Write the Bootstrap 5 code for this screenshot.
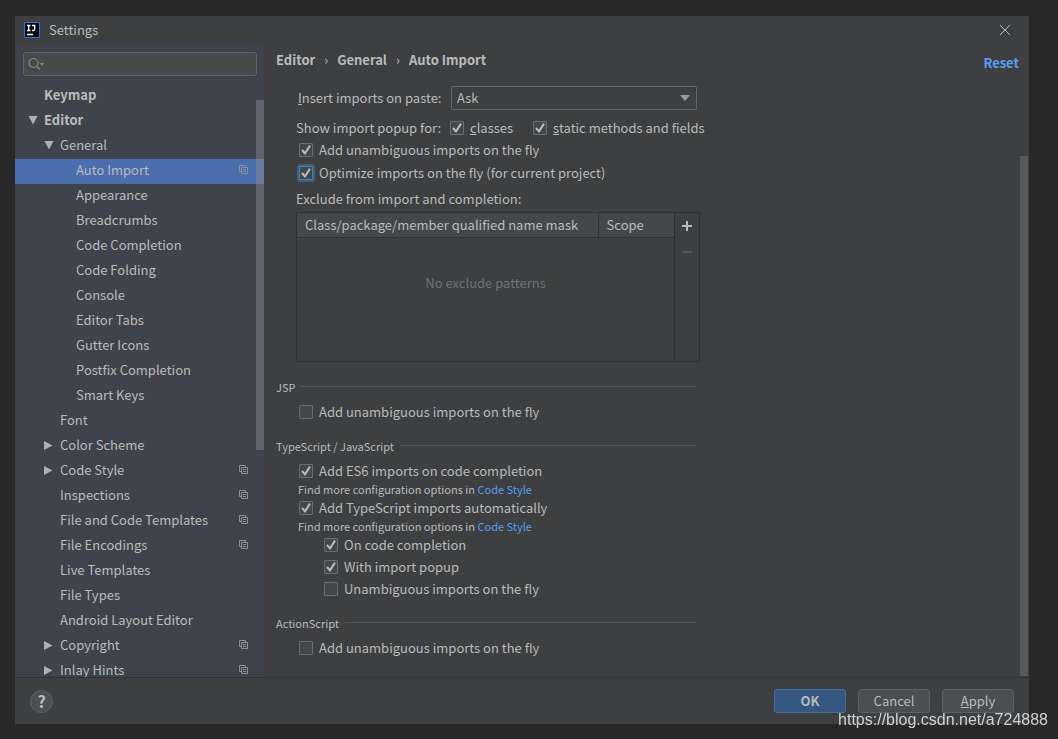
<!DOCTYPE html>
<html lang="en" data-bs-theme="dark">
<head>
<meta charset="utf-8">
<meta name="viewport" content="width=device-width, initial-scale=1">
<title>Settings</title>
<link href="https://cdn.jsdelivr.net/npm/bootstrap@5.3.0/dist/css/bootstrap.min.css" rel="stylesheet">
<style>
  :root { --panel: #3d3f40; --side: #3f434b; --edge: #2f3132; --line: #535657; --ink: #b9bbbd; --link: #589df6; }
  body { background: #282828; color: var(--ink); font: 13px/20px "Noto Sans CJK SC", "Noto Sans", sans-serif; }
  a { color: var(--link); text-decoration: none; }
  .app-shell { height: 100vh; padding: 16px 29px 15px 15px; }
  .app-window { background: var(--panel); }
  .title-bar { height: 28px; padding: 0 18px 0 9px; gap: 9px; }
  .close-btn { width: 12px; height: 12px; color: var(--ink); }
  .body-area { min-height: 0; border-bottom: 1px solid var(--edge); }

  .side-pane { width: 249px; background: var(--side); }
  .search-wrap { margin: 8px 7px 8px 8px; }
  .search-box { height: 24px; min-height: 24px; padding: 0 8px 0 24px; background: #454a4b; border: 1px solid #5f6465; border-radius: 3px; }
  .search-icon { left: 5px; top: 5px; }
  .tree-row { height: 25px; padding-right: 15px; padding-bottom: 2px; color: var(--ink); }
  .tree-row svg { flex: none; }
  .tree-row .arrow { width: 16px; }
  .lvl-0 { padding-left: 13px; }
  .lvl-1 { padding-left: 29px; }
  .lvl-2 { padding-left: 45px; }
  .tree-row.selected { background: #4b6eaf; }
  .copy-icon { color: #8b9098; }
  .side-thumb { width: 8px; height: 350px; top: 56px; background: rgba(140,142,146,.45); }

  .main-pane { min-width: 0; padding-left: 12px; }
  .crumbs { height: 32px; padding-right: 10px; }
  .crumb-sep { padding: 0 9px; font-weight: 400; }
  .reset-link { padding-top: 6px; }
  .main-thumb { width: 8px; top: 112px; bottom: 1px; right: 1px; background: #58595a; }
  .form-area { width: 421px; padding-top: 10px; }
  .opt-row { min-height: 22px; }
  .opt-row.roomy { min-height: 23px; }
  .opt-row label, .paste-row label { white-space: nowrap; }
  .tick-pair, .opt-row { gap: 6px; }
  .popup-row { column-gap: 20px; }
  .popup-title { width: 134px; }
  .paste-row { padding-left: 22px; margin-bottom: 7px; }
  .paste-select { width: 246px; height: 24px; padding: 0 5px; font-size: 13px; line-height: 20px; color: var(--ink); background-color: var(--panel); border: 1px solid #646769; border-radius: 2px; background-size: 10px 6px; background-position: right 6px center;
    background-image: url("data:image/svg+xml,%3Csvg xmlns='http://www.w3.org/2000/svg' viewBox='0 0 10 6'%3E%3Cpath fill='%239a9da0' d='M0 0h10L5 6z'/%3E%3C/svg%3E"); }
  .tick { width: 14px; height: 14px; margin: 0; flex: none; border: 1px solid #6b6e70; border-radius: 1px !important; background-color: #43494a; }
  .tick:checked { background-color: #43494a; border-color: #6b6e70; background-size: 12px 12px;
    background-image: url("data:image/svg+xml,%3Csvg xmlns='http://www.w3.org/2000/svg' viewBox='0 0 12 12'%3E%3Cpath fill='none' stroke='%23b9bbbd' stroke-width='2' d='M2 6l3 3.4L10 1.6'/%3E%3C/svg%3E"); }
  .tick.ringed { box-shadow: 0 0 0 2px #3d6185; border-color: #467fb0; }
  .in-1 { padding-left: 23px; }
  .in-2 { padding-left: 48px; }
  .in-label { padding-left: 20px; }
  .small-note { font-size: 11px; line-height: 15px; padding-left: 22px; }
  .group-head { font-size: 11px; height: 22px; margin: 12px 0 3px; gap: 6px; }
  .group-head hr { margin: 0; border-color: var(--line); opacity: 1; }

  .mask-box { margin: 3px 0 14px 20px; width: 404px; height: 150px; border: 1px solid var(--edge); }
  .mask-table { color: var(--ink); table-layout: fixed; }
  .mask-table th { height: 25px; padding: 0 8px; font-weight: 400; white-space: nowrap; background: #45484a; border-bottom: 1px solid var(--edge); }
  .mask-table th + th { width: 76px; border-left: 1px solid var(--edge); }
  .mask-table td { height: 90px; text-align: center; color: #6f7274; }
  .mask-tools { width: 25px; border-left: 1px solid var(--edge); }
  .tool-btn { height: 26px; color: var(--ink); }
  .tool-btn:disabled { color: #5f6264; }

  .foot-bar { height: 46px; padding: 0 15px; gap: 12px; }
  .help-btn { width: 23px; height: 23px; border-radius: 50%; background: #4b5052; border: 1px solid #5c6163; color: var(--ink); font-weight: 700; font-size: 16px; line-height: 20px; }
  .foot-btn { width: 72px; height: 24px; padding: 0; font-size: 13px; line-height: 22px; border-radius: 3px; color: var(--ink); background: #4b4f51; border: 1px solid #5c6062; }
  .foot-btn.main-action { background: #365880; border-color: #45709c; font-weight: 700; }
  .watermark { right: 10px; bottom: 10px; color: #d0d0d0; font: 16px/18px "Liberation Sans", sans-serif; }
</style>
</head>
<body>
<svg class="d-none" xmlns="http://www.w3.org/2000/svg">
  <symbol id="copy" viewBox="0 0 10 10"><path fill="none" stroke="currentColor" d="M2.5 6.500h-2v-6h6v2M2.500 2.500h6v6h-6zM4 4.500h3M4 6.500h3"/></symbol>
  <symbol id="open" viewBox="0 0 9 9"><path fill="#adb0b5" d="M0 0h9L4.500 8.500z"/></symbol>
  <symbol id="shut" viewBox="0 0 9 9"><path fill="#adb0b5" d="M0 0v9L8.500 4.500z"/></symbol>
</svg>
<div class="app-shell">
<div class="app-window d-flex flex-column h-100">
  <header class="title-bar d-flex align-items-center">
    <svg width="16" height="16" viewBox="0 0 16 16" aria-hidden="true"><path fill="#05070f" stroke="#2b7cc4" d="M.5.5h15v15H.5z"/><path fill="none" stroke="#fff" stroke-width="1.300" d="M3 3.500h3.500M4.750 3.500v5M3 8.500h3.500M8 3.500h2.700v3.500q0 1.500-1.500 1.500H8M3 12.500h6"/></svg>
    <span>Settings</span>
    <button class="close-btn btn p-0 border-0 d-flex ms-auto" aria-label="Close"><svg width="12" height="12" viewBox="0 0 12 12"><path fill="none" stroke="currentColor" d="M1 1l10 10M11 1L1 11"/></svg></button>
  </header>

  <div class="body-area d-flex flex-fill">
    <nav class="side-pane position-relative flex-shrink-0 overflow-hidden" aria-label="Settings sections">
      <div class="search-wrap position-relative">
        <input class="search-box form-control" type="text" aria-label="Search settings">
        <svg class="search-icon position-absolute" width="18" height="14" viewBox="0 0 18 14" aria-hidden="true"><circle cx="5.500" cy="6" r="4.500" fill="none" stroke="#838789" stroke-width="1.200"/><path stroke="#838789" stroke-width="1.500" d="M9 9.500l3 3"/><path fill="#838789" d="M11.500 6h5L14 8.500z"/></svg>
      </div>
      <a href="#" class="tree-row lvl-0 d-flex align-items-center fw-bold"><span class="arrow"></span>Keymap</a>
      <a href="#" class="tree-row lvl-0 d-flex align-items-center fw-bold"><span class="arrow d-flex"><svg width="10" height="9"><use href="#open"/></svg></span>Editor</a>
      <a href="#" class="tree-row lvl-1 d-flex align-items-center"><span class="arrow d-flex"><svg width="10" height="9"><use href="#open"/></svg></span>General</a>
      <a href="#" class="tree-row lvl-2 d-flex align-items-center selected"><span class="arrow"></span>Auto Import<svg class="copy-icon ms-auto" width="10" height="10"><use href="#copy"/></svg></a>
      <a href="#" class="tree-row lvl-2 d-flex align-items-center"><span class="arrow"></span>Appearance</a>
      <a href="#" class="tree-row lvl-2 d-flex align-items-center"><span class="arrow"></span>Breadcrumbs</a>
      <a href="#" class="tree-row lvl-2 d-flex align-items-center"><span class="arrow"></span>Code Completion</a>
      <a href="#" class="tree-row lvl-2 d-flex align-items-center"><span class="arrow"></span>Code Folding</a>
      <a href="#" class="tree-row lvl-2 d-flex align-items-center"><span class="arrow"></span>Console</a>
      <a href="#" class="tree-row lvl-2 d-flex align-items-center"><span class="arrow"></span>Editor Tabs</a>
      <a href="#" class="tree-row lvl-2 d-flex align-items-center"><span class="arrow"></span>Gutter Icons</a>
      <a href="#" class="tree-row lvl-2 d-flex align-items-center"><span class="arrow"></span>Postfix Completion</a>
      <a href="#" class="tree-row lvl-2 d-flex align-items-center"><span class="arrow"></span>Smart Keys</a>
      <a href="#" class="tree-row lvl-1 d-flex align-items-center"><span class="arrow"></span>Font</a>
      <a href="#" class="tree-row lvl-1 d-flex align-items-center"><span class="arrow d-flex"><svg width="9" height="9"><use href="#shut"/></svg></span>Color Scheme</a>
      <a href="#" class="tree-row lvl-1 d-flex align-items-center"><span class="arrow d-flex"><svg width="9" height="9"><use href="#shut"/></svg></span>Code Style<svg class="copy-icon ms-auto" width="10" height="10"><use href="#copy"/></svg></a>
      <a href="#" class="tree-row lvl-1 d-flex align-items-center"><span class="arrow"></span>Inspections<svg class="copy-icon ms-auto" width="10" height="10"><use href="#copy"/></svg></a>
      <a href="#" class="tree-row lvl-1 d-flex align-items-center"><span class="arrow"></span>File and Code Templates<svg class="copy-icon ms-auto" width="10" height="10"><use href="#copy"/></svg></a>
      <a href="#" class="tree-row lvl-1 d-flex align-items-center"><span class="arrow"></span>File Encodings<svg class="copy-icon ms-auto" width="10" height="10"><use href="#copy"/></svg></a>
      <a href="#" class="tree-row lvl-1 d-flex align-items-center"><span class="arrow"></span>Live Templates</a>
      <a href="#" class="tree-row lvl-1 d-flex align-items-center"><span class="arrow"></span>File Types</a>
      <a href="#" class="tree-row lvl-1 d-flex align-items-center"><span class="arrow"></span>Android Layout Editor</a>
      <a href="#" class="tree-row lvl-1 d-flex align-items-center"><span class="arrow d-flex"><svg width="9" height="9"><use href="#shut"/></svg></span>Copyright<svg class="copy-icon ms-auto" width="10" height="10"><use href="#copy"/></svg></a>
      <a href="#" class="tree-row lvl-1 d-flex align-items-center"><span class="arrow d-flex"><svg width="9" height="9"><use href="#shut"/></svg></span>Inlay Hints<svg class="copy-icon ms-auto" width="10" height="10"><use href="#copy"/></svg></a>
      <div class="side-thumb position-absolute end-0"></div>
    </nav>

    <main class="main-pane position-relative flex-fill overflow-hidden">
      <div class="crumbs d-flex align-items-center fw-bold">
        <span>Editor</span><span class="crumb-sep">›</span><span>General</span><span class="crumb-sep">›</span><span>Auto Import</span>
        <a href="#" class="reset-link ms-auto">Reset</a>
      </div>

      <form class="form-area">
        <div class="paste-row d-flex align-items-center justify-content-between">
          <label for="paste"><u>I</u>nsert imports on paste:</label>
          <select id="paste" class="paste-select form-select"><option>Ask</option></select>
        </div>
        <div class="opt-row popup-row in-label d-flex align-items-center">
          <span class="popup-title text-nowrap">Show import popup for:</span>
          <span class="tick-pair d-flex align-items-center"><input class="tick form-check-input" type="checkbox" id="cls" checked><label for="cls"><u>c</u>lasses</label></span>
          <span class="tick-pair d-flex align-items-center"><input class="tick form-check-input" type="checkbox" id="stat" checked><label for="stat"><u>s</u>tatic methods and fields</label></span>
        </div>
        <div class="opt-row roomy in-1 d-flex align-items-center"><input class="tick form-check-input" type="checkbox" id="unamb" checked><label for="unamb">Add unambiguous imports on the fly</label></div>
        <div class="opt-row roomy in-1 d-flex align-items-center"><input class="tick ringed form-check-input" type="checkbox" id="optim" checked><label for="optim">Optimize imports on the fly (for current project)</label></div>
        <div class="opt-row in-label pt-1">Exclude from import and completion:</div>

        <div class="mask-box d-flex">
          <div class="flex-fill">
            <table class="mask-table w-100">
              <thead><tr><th>Class/package/member qualified name mask</th><th>Scope</th></tr></thead>
              <tbody><tr><td colspan="2">No exclude patterns</td></tr></tbody>
            </table>
          </div>
          <div class="mask-tools d-flex flex-column flex-shrink-0">
            <button type="button" class="tool-btn btn p-0 border-0" aria-label="Add"><svg class="d-block m-auto" width="10" height="10" viewBox="0 0 10 10"><path stroke="currentColor" stroke-width="2" d="M0 5h10M5 0v10"/></svg></button>
            <button type="button" class="tool-btn btn p-0 border-0" aria-label="Remove" disabled><svg class="d-block m-auto" width="10" height="10" viewBox="0 0 10 10"><path stroke="currentColor" stroke-width="2" d="M0 5h10"/></svg></button>
          </div>
        </div>

        <div class="group-head d-flex align-items-center"><span>JSP</span><hr class="flex-fill"></div>
        <div class="opt-row in-1 d-flex align-items-center"><input class="tick form-check-input" type="checkbox" id="jsp"><label for="jsp">Add unambiguous imports on the fly</label></div>

        <div class="group-head d-flex align-items-center"><span>TypeScript / JavaScript</span><hr class="flex-fill"></div>
        <div class="opt-row in-1 d-flex align-items-center"><input class="tick form-check-input" type="checkbox" id="es6" checked><label for="es6">Add ES6 imports on code completion</label></div>
        <div class="small-note">Find more configuration options in <a href="#">Code Style</a></div>
        <div class="opt-row in-1 d-flex align-items-center"><input class="tick form-check-input" type="checkbox" id="tsauto" checked><label for="tsauto">Add TypeScript imports automatically</label></div>
        <div class="small-note">Find more configuration options in <a href="#">Code Style</a></div>
        <div class="opt-row in-2 d-flex align-items-center"><input class="tick form-check-input" type="checkbox" id="oncode" checked><label for="oncode">On code completion</label></div>
        <div class="opt-row in-2 d-flex align-items-center"><input class="tick form-check-input" type="checkbox" id="withpop" checked><label for="withpop">With import popup</label></div>
        <div class="opt-row in-2 d-flex align-items-center"><input class="tick form-check-input" type="checkbox" id="unfly"><label for="unfly">Unambiguous imports on the fly</label></div>

        <div class="group-head d-flex align-items-center"><span>ActionScript</span><hr class="flex-fill"></div>
        <div class="opt-row in-1 d-flex align-items-center"><input class="tick form-check-input" type="checkbox" id="as"><label for="as">Add unambiguous imports on the fly</label></div>
      </form>
      <div class="main-thumb position-absolute"></div>
    </main>
  </div>

  <footer class="foot-bar d-flex align-items-center">
    <button class="help-btn p-0 me-auto" aria-label="Help">?</button>
    <button class="foot-btn main-action btn">OK</button>
    <button class="foot-btn btn">Cancel</button>
    <button class="foot-btn btn"><u>A</u>pply</button>
  </footer>
</div>
</div>
<div class="watermark position-fixed">https://blog.csdn.net/a724888</div>
</body>
</html>
